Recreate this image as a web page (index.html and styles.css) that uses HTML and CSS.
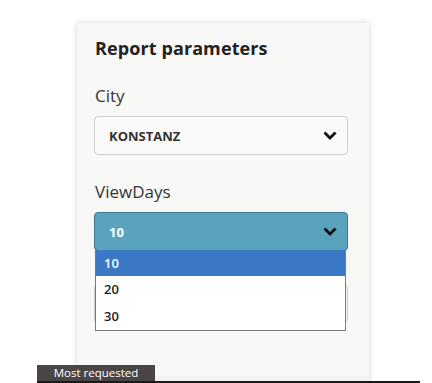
FILE: index.html
```html
<!DOCTYPE html>
<html lang="en">
<head>
  <meta charset="UTF-8">
  <title>Report parameters</title>
  <link rel="stylesheet" href="styles.css">
</head>
<body>
  <div class="page">
    <div class="panel">
      <h2>Report parameters</h2>

      <div class="field">
        <label>City</label>
        <div class="select">
          <span>KONSTANZ</span>
          <svg class="chevron" viewBox="0 0 14 9" width="14" height="9"><path d="M1.5 1.5 L7 7 L12.5 1.5" fill="none" stroke="#111" stroke-width="2.8"/></svg>
        </div>
      </div>

      <div class="field">
        <label>ViewDays</label>
        <div class="select-wrap">
          <div class="select active">
            <span>10</span>
            <svg class="chevron" viewBox="0 0 14 9" width="14" height="9"><path d="M1.5 1.5 L7 7 L12.5 1.5" fill="none" stroke="#111" stroke-width="2.8"/></svg>
          </div>
          <ul class="options">
            <li class="selected">10</li>
            <li>20</li>
            <li>30</li>
          </ul>
        </div>
        <div class="select hidden-box"></div>
      </div>
    </div>
  </div>

  <div class="tabs">
    <div class="tab">Most requested</div>
  </div>
</body>
</html>
```

FILE: styles.css
```css
body {
  margin: 0;
  background-color: #fff;
  font-family: "Open Sans", "Noto Sans", sans-serif;
  height: 383px;
  overflow: hidden;
  position: relative;
}

.page {
  padding: 23px 0 0 77px;
}

.panel {
  width: 254px;
  height: 340px;
  padding: 13px 21px 0 17px;
  background-color: #f8f8f6;
  box-shadow: 0 0 6px rgba(0, 0, 0, 0.18);
  border-bottom: 6px solid #f1f3f7;
}

h2 {
  margin: 0 0 24px 1px;
  font-size: 18px;
  font-weight: 700;
  color: #222;
  letter-spacing: 0.1px;
}

.field label {
  display: block;
  font-size: 17px;
  color: #333;
  margin: 0 0 9px 1px;
}

.field {
  margin-bottom: 25px;
}

.select {
  height: 37px;
  border: 1px solid #cfcfcf;
  border-radius: 4px;
  background-color: #fafafa;
  display: flex;
  align-items: center;
  justify-content: space-between;
  padding: 0 10px 0 14px;
  font-size: 13px;
  font-weight: 700;
  color: #333;
}

.select.active {
  background-color: #5aa3bd;
  border-color: #3d7890;
  color: #fff;
}

.select-wrap {
  position: relative;
}

.options {
  position: absolute;
  left: 1px;
  right: 2px;
  top: 38px;
  margin: 0;
  padding: 0;
  list-style: none;
  background-color: #fff;
  border: 1px solid #7a7a7a;
  border-top: none;
  z-index: 2;
}

.options li {
  height: 27px;
  line-height: 27px;
  padding-left: 8px;
  font-size: 13px;
  font-weight: 600;
  color: #222;
}

.options li.selected {
  background-color: #3c79c5;
  color: #fff;
  height: 26px;
}

.hidden-box {
  margin-top: 33px;
}

.tabs {
  position: absolute;
  left: 37px;
  right: 12px;
  bottom: 0;
  border-bottom: 2px solid #1a1a1a;
}

.tab {
  width: 118px;
  height: 16px;
  line-height: 16px;
  background-color: #4b4646;
  color: #fff;
  font-size: 11.5px;
  text-align: center;
}
```
